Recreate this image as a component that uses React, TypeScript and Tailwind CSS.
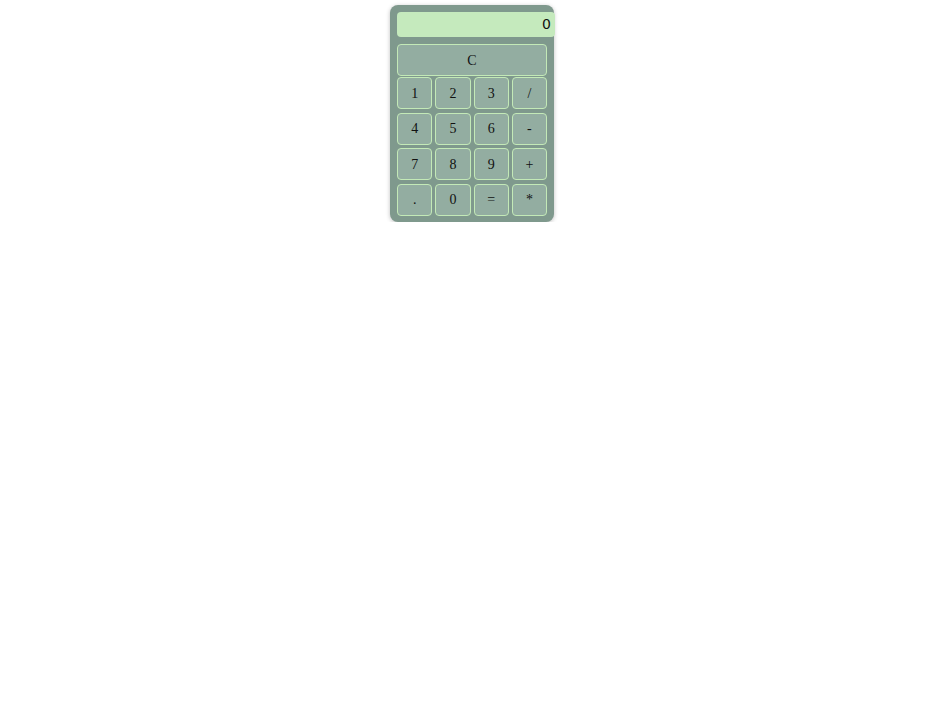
export default function App() {
  const keys = ["1", "2", "3", "/", "4", "5", "6", "-", "7", "8", "9", "+", ".", "0", "=", "*"];
  return (
    <div className="flex w-full justify-center bg-white pt-[5px]">
      <div className="w-[164px] rounded-lg bg-[#7f998d] px-[7px] pt-[7px] pb-[6px] shadow-[0_1px_4px_rgba(0,0,0,0.25)]">
        <div className="flex h-[25px] w-[158px] items-center justify-end rounded-[4px] bg-[#c5eabd] pr-[4px] text-[14px] text-[#111] font-['DejaVu_Sans',sans-serif]">
          0
        </div>
        <button className="mt-[7px] flex h-[32px] w-[150px] items-center justify-center rounded-[4px] border border-[#c3e9b7] bg-[#93ada1] text-[14px] text-[#111] font-['Liberation_Serif',serif]">
          C
        </button>
        <div className="mt-[1px] grid w-[150px] grid-cols-4 gap-x-[3px] gap-y-[3.67px]">
          {keys.map((k) => (
            <button
              key={k}
              className="flex h-[32px] items-center justify-center rounded-[4px] border border-[#c3e9b7] bg-[#93ada1] text-[14px] text-[#111] font-['Liberation_Serif',serif]"
            >
              {k}
            </button>
          ))}
        </div>
      </div>
    </div>
  );
}
